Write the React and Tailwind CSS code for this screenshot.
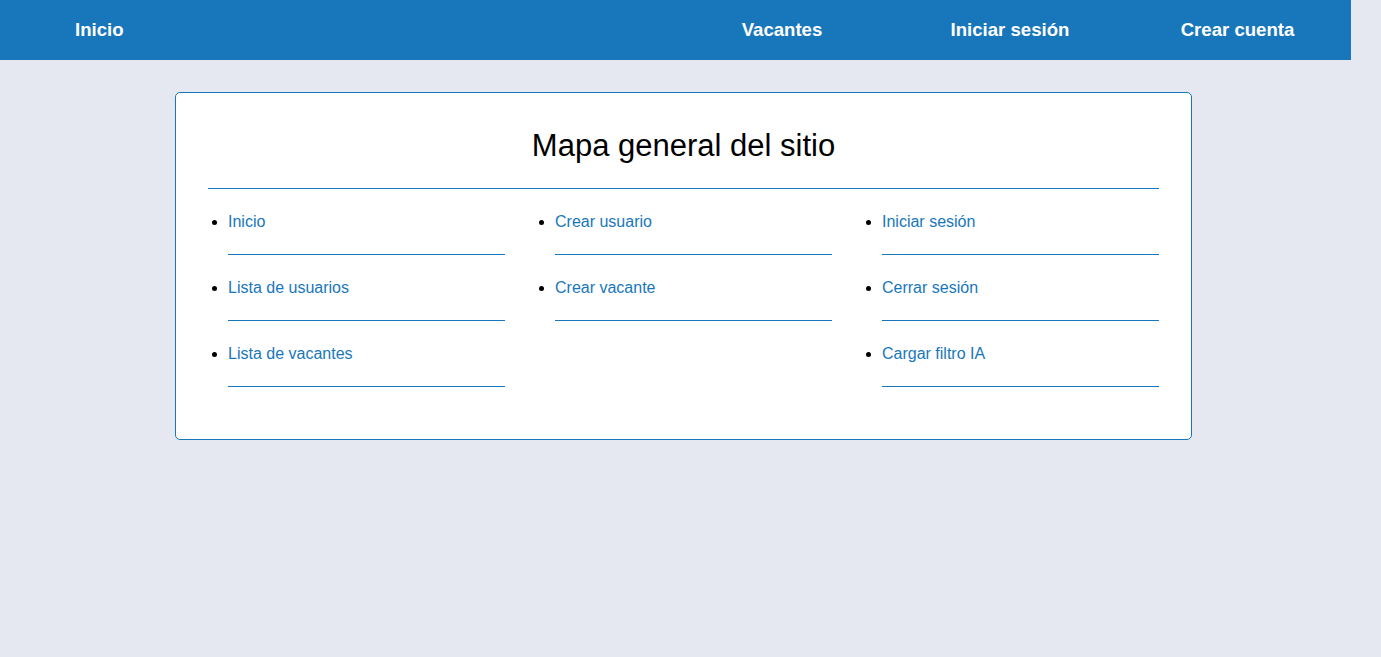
import React from "react";

const cols = [
  ["Inicio", "Lista de usuarios", "Lista de vacantes"],
  ["Crear usuario", "Crear vacante"],
  ["Iniciar sesión", "Cerrar sesión", "Cargar filtro IA"],
];

export default function App() {
  return (
    <div
      className="min-h-[657px] bg-[#e5e8f0]"
      style={{ fontFamily: '"Liberation Sans", Arial, sans-serif' }}
    >
      <header className="flex h-[60px] w-[1351px] items-center bg-[#1877bb] text-[18.6px] font-bold text-white">
        <a className="pl-[75px]">Inicio</a>
        <nav className="ml-auto flex">
          <a className="w-[228px] text-center">Vacantes</a>
          <a className="w-[228px] text-center">Iniciar sesión</a>
          <a className="w-[227px] text-center">Crear cuenta</a>
        </nav>
      </header>
      <main className="pt-[32px]">
        <section className="ml-[175px] w-[1017px] rounded-[5px] border border-[#1877bb] bg-white px-[32px] pb-[32px] pt-[35px]">
          <h2 className="text-center text-[31px] leading-[36px] text-black">
            Mapa general del sitio
          </h2>
          <hr className="mt-[24px] border-0 border-t border-[#1877bb]" />
          <div className="mt-[20px] grid grid-cols-3 gap-[30px]">
            {cols.map((c, i) => (
              <ul key={i} className="list-disc pl-[20px]">
                {c.map((t) => (
                  <li
                    key={t}
                    className="mb-[20px] border-b border-[#1877bb] pb-[20px] text-[16px] leading-[25px]"
                  >
                    <a className="text-[#1877bb]">{t}</a>
                  </li>
                ))}
              </ul>
            ))}
          </div>
        </section>
      </main>
    </div>
  );
}
